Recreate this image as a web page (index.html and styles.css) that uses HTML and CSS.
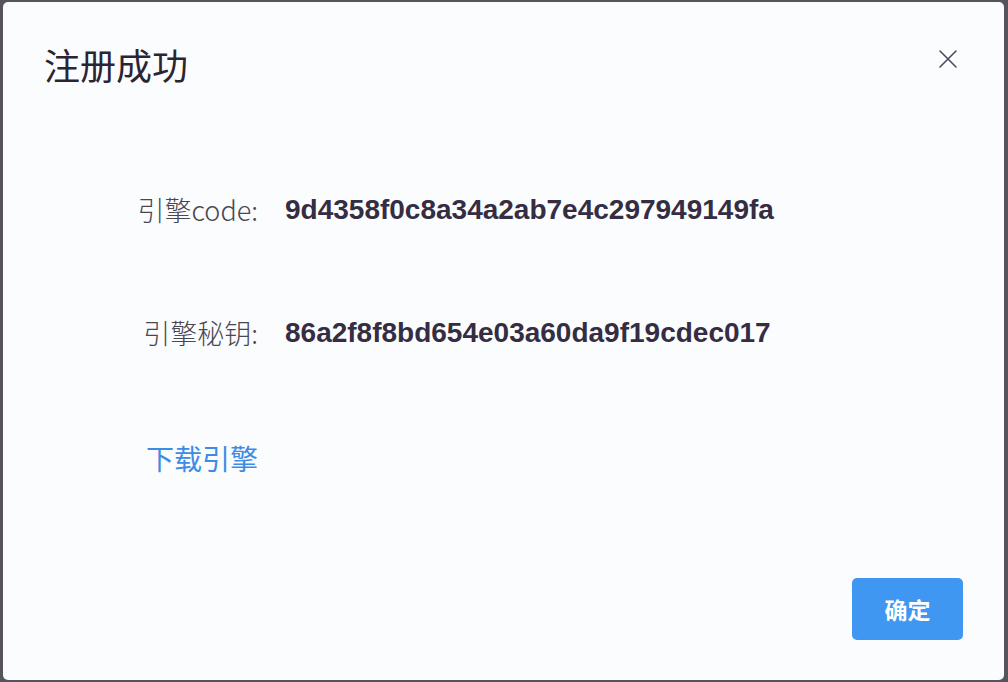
FILE: index.html
```html
<!DOCTYPE html>
<html lang="zh-CN">
<head>
<meta charset="utf-8">
<title>注册成功</title>
<link rel="stylesheet" href="styles.css">
</head>
<body>
<div class="overlay">
  <div class="dialog">
    <div class="dialog-header">
      <span class="dialog-title">注册成功</span>
      <button class="close-btn" aria-label="关闭">
        <svg width="20" height="20" viewBox="0 0 20 20"><path d="M2 2 L18 18 M18 2 L2 18" stroke="#4f4960" stroke-width="1.6" fill="none" stroke-linecap="round"/></svg>
      </button>
    </div>
    <div class="dialog-body">
      <div class="info-row">
        <span class="info-label">引擎code:</span>
        <span class="info-value">9d4358f0c8a34a2ab7e4c297949149fa</span>
      </div>
      <div class="info-row row-second">
        <span class="info-label">引擎秘钥:</span>
        <span class="info-value">86a2f8f8bd654e03a60da9f19cdec017</span>
      </div>
      <a class="download-link" href="#">下载引擎</a>
    </div>
    <div class="dialog-footer">
      <button class="confirm-btn">确定</button>
    </div>
  </div>
</div>
</body>
</html>
```

FILE: styles.css
```css
html, body {
  margin: 0;
  padding: 0;
  background: #57535c;
  width: 1008px;
  height: 682px;
  overflow: hidden;
}

.overlay {
  padding: 2px 4px 0 3px;
  height: 680px;
  box-sizing: border-box;
}

.dialog {
  background: #fbfcfe;
  border-radius: 5px;
  height: 678px;
  box-sizing: border-box;
  display: flex;
  flex-direction: column;
  font-family: "Noto Sans CJK SC", "Noto Sans", sans-serif;
}

.dialog-header {
  display: flex;
  justify-content: space-between;
  align-items: flex-start;
  padding: 41px 46px 0 41px;
}

.dialog-title {
  font-size: 36px;
  line-height: 42px;
  color: #2b2433;
  font-weight: 400;
}

.close-btn {
  border: none;
  background: transparent;
  padding: 0;
  margin-top: 6px;
  width: 20px;
  height: 20px;
  cursor: pointer;
}

.close-btn svg {
  display: block;
}

.dialog-body {
  display: flex;
  flex-direction: column;
  margin-top: 105px;
}

.info-row {
  display: grid;
  grid-template-columns: 128px auto;
  column-gap: 27px;
  padding-left: 127px;
  align-items: center;
  height: 40px;
}

.row-second {
  margin-top: 83px;
}

.info-label {
  text-align: right;
  font-size: 27px;
  line-height: 40px;
  color: #4a4652;
  font-weight: 300;
  white-space: nowrap;
}

.info-value {
  font-family: "Liberation Sans", Arial, sans-serif;
  font-size: 28px;
  line-height: 40px;
  color: #352d42;
  font-weight: 700;
  white-space: nowrap;
}

.download-link {
  align-self: flex-start;
  margin: 85px 0 0 143px;
  font-size: 28px;
  line-height: 40px;
  color: #3c8ce6;
  text-decoration: none;
}

.dialog-footer {
  display: flex;
  justify-content: flex-end;
  padding-right: 41px;
  margin-top: 100px;
}

.confirm-btn {
  width: 111px;
  height: 62px;
  border: none;
  border-radius: 5px;
  background: #3f97f2;
  color: #ffffff;
  font-family: "Noto Sans CJK SC", "Noto Sans", sans-serif;
  font-size: 23px;
  font-weight: 700;
  cursor: pointer;
}
```
